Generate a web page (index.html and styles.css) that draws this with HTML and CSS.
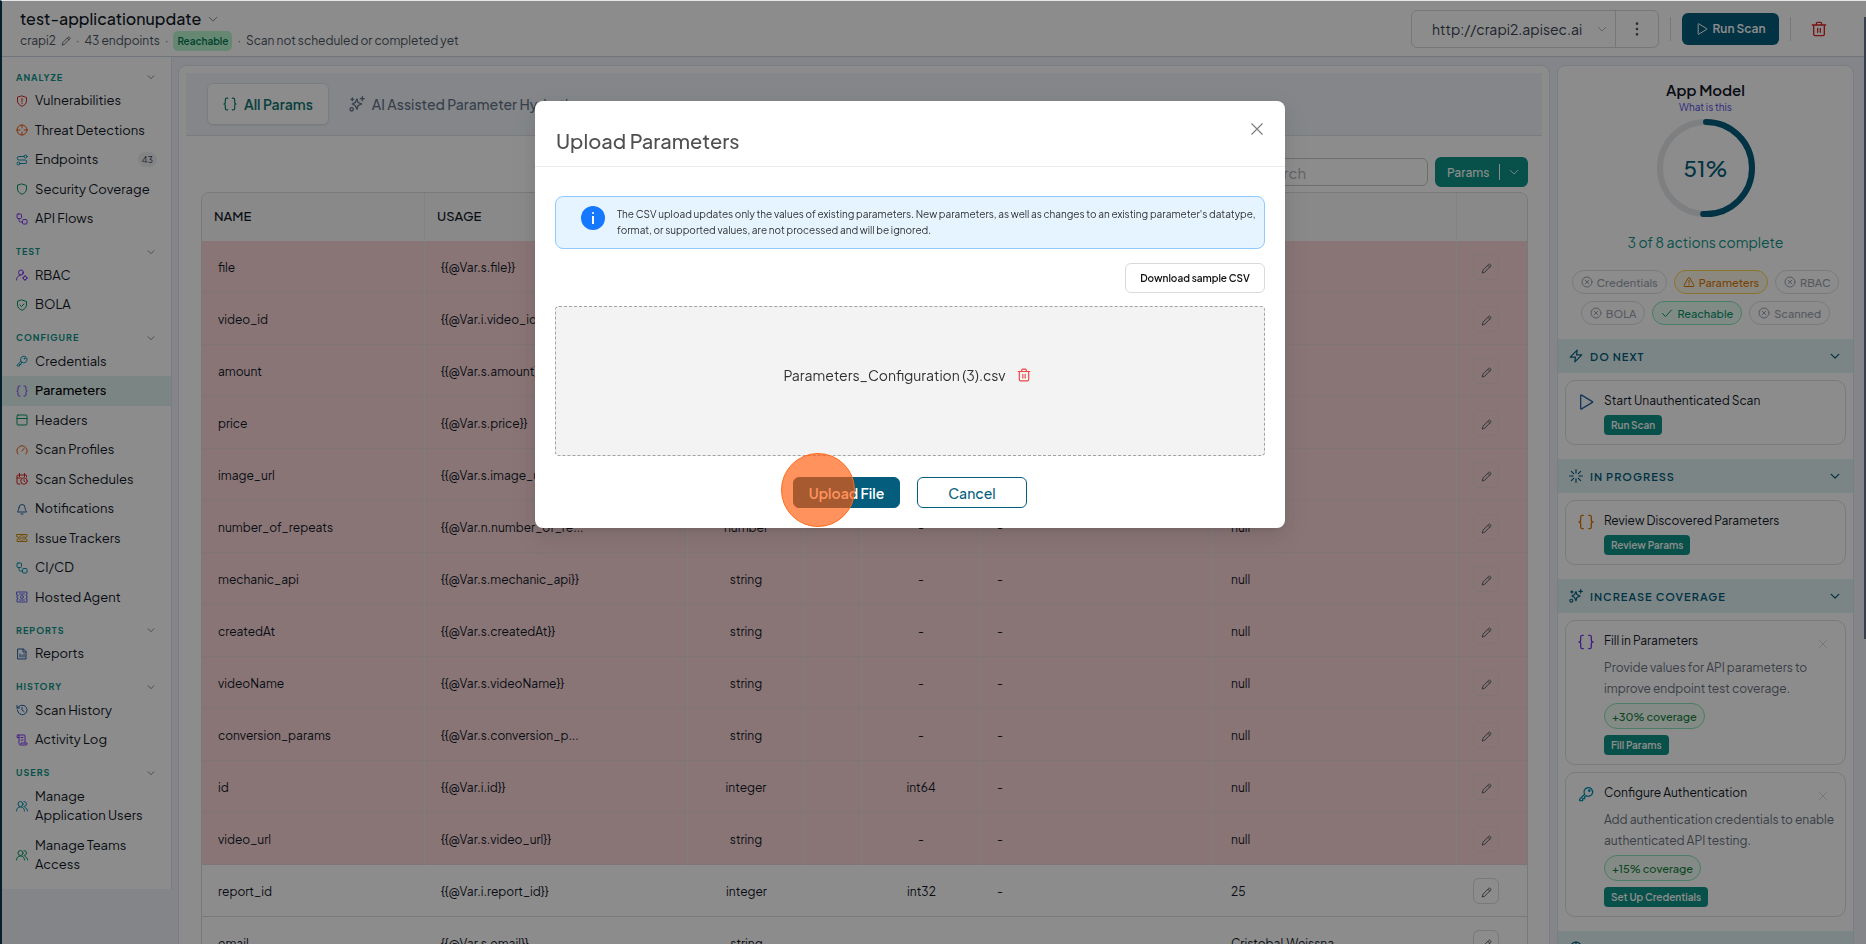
FILE: index.html
```html
<!DOCTYPE html>
<html lang="en">
<head>
  <meta charset="UTF-8">
  <meta name="viewport" content="width=device-width, initial-scale=1.0">
  <title>test-applicationupdate - Parameters</title>
  <link rel="stylesheet" href="styles.css">
</head>
<body>

  <!-- icon sprite -->
  <svg class="sprite" aria-hidden="true">
    <symbol id="i-down" viewBox="0 0 24 24"><path d="M3 8l9 9 9-9"/></symbol>
    <symbol id="i-pencil" viewBox="0 0 24 24"><path d="M3 21l1.500-5.500L17 3a2 2 0 0 1 3 0l1 1a2 2 0 0 1 0 3L8.500 19.500zM15 5l4 4"/></symbol>
    <symbol id="i-braces" viewBox="0 0 24 24"><path d="M8 2H6.500A2.500 2.500 0 0 0 4 4.500V9c0 1.700-1 3-2.500 3C3 12 4 13.300 4 15v4.500A2.500 2.500 0 0 0 6.500 22H8M16 2h1.500A2.500 2.500 0 0 1 20 4.500V9c0 1.700 1 3 2.500 3-1.500 0-2.500 1.300-2.500 3v4.500a2.500 2.500 0 0 1-2.500 2.500H16"/></symbol>
    <symbol id="i-spark" viewBox="0 0 24 24"><path d="M12 4.500l1.500 5L19 12l-5.500 2.500L12 20l-2.500-5.500L5 12l4.500-2.500zM20 1v6M17 4h6M5 3v4M3 5h4"/><circle cx="4" cy="20" r="2.500"/></symbol>
    <symbol id="i-shield" viewBox="0 0 24 24"><path d="M12 2l9 3v7c0 5-4 8.500-9 10.500C7 20.500 3 17 3 12V5z"/></symbol>
    <symbol id="i-shield-alert" viewBox="0 0 24 24"><path d="M12 2l9 3v7c0 5-4 8.500-9 10.500C7 20.500 3 17 3 12V5zM12 7v6M12 16v1"/></symbol>
    <symbol id="i-shield-check" viewBox="0 0 24 24"><path d="M12 2l9 3v7c0 5-4 8.500-9 10.500C7 20.500 3 17 3 12V5zM8 12l3 3 5-5"/></symbol>
    <symbol id="i-target" viewBox="0 0 24 24"><circle cx="12" cy="12" r="10"/><path d="M12 2v6M12 16v6M2 12h6M16 12h6"/></symbol>
    <symbol id="i-route" viewBox="0 0 24 24"><path d="M16 5H6a3.500 3.500 0 0 0 0 7h12a3.500 3.500 0 0 1 0 7H8"/><circle cx="19" cy="5" r="3"/><circle cx="5" cy="19" r="3"/></symbol>
    <symbol id="i-flow" viewBox="0 0 24 24"><rect x="2" y="2" width="9" height="9" rx="2"/><rect x="13" y="13" width="9" height="9" rx="2"/><path d="M6 11v4a3 3 0 0 0 3 3h4"/></symbol>
    <symbol id="i-user-cog" viewBox="0 0 24 24"><circle cx="10" cy="7" r="5"/><path d="M1 22c0-5 3-9 8-10M14 7a5 5 0 0 1-2 4"/><circle cx="18" cy="18" r="3.500"/><path d="M18 13v2M18 21v2M13 18h2M21 18h2"/></symbol>
    <symbol id="i-key" viewBox="0 0 24 24"><path d="M10 12.500L2.500 20v2H7v-3h3v-3l2-1.500a6.500 6.500 0 1 0-2-2z"/><circle cx="17" cy="7" r="1"/></symbol>
    <symbol id="i-panel" viewBox="0 0 24 24"><rect x="2" y="2" width="20" height="20" rx="2"/><path d="M2 9h20"/></symbol>
    <symbol id="i-gauge" viewBox="0 0 24 24"><path d="M4 20a10 10 0 1 1 16 0M12 14l4-5"/></symbol>
    <symbol id="i-calendar" viewBox="0 0 24 24"><path d="M21 8V5a1 1 0 0 0-1-1H4a2 2 0 0 0-2 2v14a2 2 0 0 0 2 2h4M7 1v6M17 1v6M2 10h8"/><circle cx="16" cy="16" r="6.500"/><path d="M16 13v3l2 2"/></symbol>
    <symbol id="i-bell" viewBox="0 0 24 24"><path d="M6 9a6 6 0 0 1 12 0c0 6 3 7 3 9H3c0-2 3-3 3-9M10 22h4"/></symbol>
    <symbol id="i-ticket" viewBox="0 0 24 24"><path d="M2 5h20v4a3 3 0 0 0 0 6v4H2v-4a3 3 0 0 0 0-6zM12 5v3M12 11v3M12 17v2M8 8v8M16 8v8"/></symbol>
    <symbol id="i-agent" viewBox="0 0 24 24"><path d="M2 2h20v6h-2v2h2v4h-2v2h2v6H2v-6h2v-2H2v-4h2V8H2z"/><circle cx="12" cy="12" r="3"/><path d="M7 6h10M7 18h10"/></symbol>
    <symbol id="i-file" viewBox="0 0 24 24"><path d="M4 2h11l5 5v15H4zM14 2v6h6M8 12v6M12 14v4M16 12v6"/></symbol>
    <symbol id="i-history" viewBox="0 0 24 24"><path d="M3 12a9.500 9.500 0 1 0 3-7L2 8M2 3v5h5M12 7v5l4 3"/></symbol>
    <symbol id="i-scroll" viewBox="0 0 24 24"><path d="M18 17V4a2 2 0 0 0-2-2H4a2 2 0 0 1 2 2v15a3 3 0 0 0 3 3h11a2 2 0 0 0 2-2v-2H10v2M4 2a2 2 0 0 0-2 3v2h4M10 7h4M10 12h4"/></symbol>
    <symbol id="i-users" viewBox="0 0 24 24"><circle cx="9" cy="8" r="5"/><path d="M1 22c0-5 3-8 8-8s8 3 8 8M16 3a5 5 0 0 1 0 10M18 15c3 1 5 3 5 7"/></symbol>
    <symbol id="i-play" viewBox="0 0 24 24"><path d="M4 3a1 1 0 0 1 2-1l15 9a1 1 0 0 1 0 2L6 22a1 1 0 0 1-2-1z"/></symbol>
    <symbol id="i-trash" viewBox="0 0 24 24"><path d="M2 6h20M4 6v14a2 2 0 0 0 2 2h12a2 2 0 0 0 2-2V6M8 6V4a2 2 0 0 1 2-2h4a2 2 0 0 1 2 2v2M10 11v6M14 11v6"/></symbol>
    <symbol id="i-dots" viewBox="0 0 24 24"><path d="M12 4v.01M12 12v.01M12 20v.01"/></symbol>
    <symbol id="i-x" viewBox="0 0 24 24"><path d="M3 3l18 18M21 3L3 21"/></symbol>
    <symbol id="i-circle-x" viewBox="0 0 24 24"><circle cx="12" cy="12" r="10"/><path d="M8.500 8.500l7 7M15.500 8.500l-7 7"/></symbol>
    <symbol id="i-warn" viewBox="0 0 24 24"><path d="M10.500 4a2 2 0 0 1 3 0l8.500 15a1.500 1.500 0 0 1-1 2H3a1.500 1.500 0 0 1-1-2zM12 9v5M12 17v1"/></symbol>
    <symbol id="i-check" viewBox="0 0 24 24"><path d="M3 13l6 6L21 6"/></symbol>
    <symbol id="i-bolt" viewBox="0 0 24 24"><path d="M14 2L2 14h9l-1 8 12-12h-9z"/></symbol>
    <symbol id="i-loader" viewBox="0 0 24 24"><path d="M12 1v6M12 17v6M1 12h6M17 12h6M4 4l4 4M16 16l4 4M4 20l4-4M16 8l4-4"/></symbol>
  </svg>

  <div class="app">
    <header class="topbar">
      <div class="app-info">
        <h1>test-applicationupdate <svg class="icon icon-s"><use href="#i-down"/></svg></h1>
        <p class="app-meta">
          <span>crapi2</span><svg class="icon icon-s"><use href="#i-pencil"/></svg><span class="sep">·</span>
          <span>43 endpoints</span><span class="sep">·</span>
          <span class="reachable">Reachable</span><span class="sep">·</span>
          <span>Scan not scheduled or completed yet</span>
        </p>
      </div>
      <div class="top-actions">
        <div class="host-box">
          <select class="host" aria-label="Host"><option>http://crapi2.apisec.ai</option></select>
          <svg class="icon icon-s"><use href="#i-down"/></svg>
          <button class="more" aria-label="More"><svg class="icon icon-l"><use href="#i-dots"/></svg></button>
        </div>
        <span class="divider"></span>
        <button class="run-scan"><svg class="icon"><use href="#i-play"/></svg>Run Scan</button>
        <span class="divider"></span>
        <button class="remove-app" aria-label="Delete application"><svg class="icon icon-l"><use href="#i-trash"/></svg></button>
      </div>
    </header>

    <div class="body">
      <nav class="sidebar">
        <h2>ANALYZE<svg class="icon icon-xs"><use href="#i-down"/></svg></h2>
        <a href="#" class="red"><svg class="icon"><use href="#i-shield-alert"/></svg><span>Vulnerabilities</span></a>
        <a href="#" class="orange"><svg class="icon"><use href="#i-target"/></svg><span>Threat Detections</span></a>
        <a href="#" class="cyan"><svg class="icon"><use href="#i-route"/></svg><span>Endpoints</span><em>43</em></a>
        <a href="#" class="green"><svg class="icon"><use href="#i-shield"/></svg><span>Security Coverage</span></a>
        <a href="#" class="purple"><svg class="icon"><use href="#i-flow"/></svg><span>API Flows</span></a>
        <h2>TEST<svg class="icon icon-xs"><use href="#i-down"/></svg></h2>
        <a href="#" class="purple"><svg class="icon"><use href="#i-user-cog"/></svg><span>RBAC</span></a>
        <a href="#" class="green"><svg class="icon"><use href="#i-shield-check"/></svg><span>BOLA</span></a>
        <h2>CONFIGURE<svg class="icon icon-xs"><use href="#i-down"/></svg></h2>
        <a href="#" class="cyan"><svg class="icon"><use href="#i-key"/></svg><span>Credentials</span></a>
        <a href="#" class="purple active"><svg class="icon"><use href="#i-braces"/></svg><span>Parameters</span></a>
        <a href="#" class="green"><svg class="icon"><use href="#i-panel"/></svg><span>Headers</span></a>
        <a href="#" class="orange"><svg class="icon"><use href="#i-gauge"/></svg><span>Scan Profiles</span></a>
        <a href="#" class="red"><svg class="icon"><use href="#i-calendar"/></svg><span>Scan Schedules</span></a>
        <a href="#" class="blue"><svg class="icon"><use href="#i-bell"/></svg><span>Notifications</span></a>
        <a href="#" class="yellow"><svg class="icon"><use href="#i-ticket"/></svg><span>Issue Trackers</span></a>
        <a href="#" class="cyan"><svg class="icon"><use href="#i-flow"/></svg><span>CI/CD</span></a>
        <a href="#" class="indigo"><svg class="icon"><use href="#i-agent"/></svg><span>Hosted Agent</span></a>
        <h2>REPORTS<svg class="icon icon-xs"><use href="#i-down"/></svg></h2>
        <a href="#" class="blue"><svg class="icon"><use href="#i-file"/></svg><span>Reports</span></a>
        <h2>HISTORY<svg class="icon icon-xs"><use href="#i-down"/></svg></h2>
        <a href="#" class="blue"><svg class="icon"><use href="#i-history"/></svg><span>Scan History</span></a>
        <a href="#" class="purple"><svg class="icon"><use href="#i-scroll"/></svg><span>Activity Log</span></a>
        <h2>USERS<svg class="icon icon-xs"><use href="#i-down"/></svg></h2>
        <a href="#" class="cyan"><svg class="icon"><use href="#i-users"/></svg><span>Manage Application Users</span></a>
        <a href="#" class="green"><svg class="icon"><use href="#i-users"/></svg><span>Manage Teams Access</span></a>
      </nav>

      <main class="content">
        <div class="tabs">
          <button class="tab current"><svg class="icon"><use href="#i-braces"/></svg>All Params</button>
          <button class="tab"><svg class="icon icon-l"><use href="#i-spark"/></svg>AI Assisted Parameter Hydration</button>
        </div>

        <div class="table-area">
          <div class="toolbar">
            <input type="text" class="search" placeholder="Search" aria-label="Search">
            <button class="params-btn">Params<span class="bar"></span><svg class="icon icon-s"><use href="#i-down"/></svg></button>
          </div>

          <div class="table-box">
            <table>
              <colgroup>
                <col class="c-name"><col class="c-usage"><col class="c-type"><col class="c-gap"><col class="c-format"><col class="c-values"><col class="c-default"><col class="c-edit">
              </colgroup>
              <thead>
                <tr><th>NAME</th><th>USAGE</th><th></th><th></th><th></th><th></th><th></th><th></th></tr>
              </thead>
              <tbody>
                <tr class="missing"><td>file</td><td>{{@Var.s.file}}</td><td></td><td></td><td></td><td></td><td></td><td><button class="edit" aria-label="Edit"><svg class="icon"><use href="#i-pencil"/></svg></button></td></tr>
                <tr class="missing"><td>video_id</td><td>{{@Var.i.video_id}}</td><td></td><td></td><td></td><td></td><td></td><td><button class="edit" aria-label="Edit"><svg class="icon"><use href="#i-pencil"/></svg></button></td></tr>
                <tr class="missing"><td>amount</td><td>{{@Var.s.amount}}</td><td></td><td></td><td></td><td></td><td></td><td><button class="edit" aria-label="Edit"><svg class="icon"><use href="#i-pencil"/></svg></button></td></tr>
                <tr class="missing"><td>price</td><td>{{@Var.s.price}}</td><td></td><td></td><td></td><td></td><td></td><td><button class="edit" aria-label="Edit"><svg class="icon"><use href="#i-pencil"/></svg></button></td></tr>
                <tr class="missing"><td>image_url</td><td>{{@Var.s.image_url}}</td><td></td><td></td><td></td><td></td><td></td><td><button class="edit" aria-label="Edit"><svg class="icon"><use href="#i-pencil"/></svg></button></td></tr>
                <tr class="missing"><td>number_of_repeats</td><td>{{@Var.n.number_of_re...</td><td>number</td><td></td><td>-</td><td>-</td><td>null</td><td><button class="edit" aria-label="Edit"><svg class="icon"><use href="#i-pencil"/></svg></button></td></tr>
                <tr class="missing"><td>mechanic_api</td><td>{{@Var.s.mechanic_api}}</td><td>string</td><td></td><td>-</td><td>-</td><td>null</td><td><button class="edit" aria-label="Edit"><svg class="icon"><use href="#i-pencil"/></svg></button></td></tr>
                <tr class="missing"><td>createdAt</td><td>{{@Var.s.createdAt}}</td><td>string</td><td></td><td>-</td><td>-</td><td>null</td><td><button class="edit" aria-label="Edit"><svg class="icon"><use href="#i-pencil"/></svg></button></td></tr>
                <tr class="missing"><td>videoName</td><td>{{@Var.s.videoName}}</td><td>string</td><td></td><td>-</td><td>-</td><td>null</td><td><button class="edit" aria-label="Edit"><svg class="icon"><use href="#i-pencil"/></svg></button></td></tr>
                <tr class="missing"><td>conversion_params</td><td>{{@Var.s.conversion_p...</td><td>string</td><td></td><td>-</td><td>-</td><td>null</td><td><button class="edit" aria-label="Edit"><svg class="icon"><use href="#i-pencil"/></svg></button></td></tr>
                <tr class="missing"><td>id</td><td>{{@Var.i.id}}</td><td>integer</td><td></td><td>int64</td><td>-</td><td>null</td><td><button class="edit" aria-label="Edit"><svg class="icon"><use href="#i-pencil"/></svg></button></td></tr>
                <tr class="missing"><td>video_url</td><td>{{@Var.s.video_url}}</td><td>string</td><td></td><td>-</td><td>-</td><td>null</td><td><button class="edit" aria-label="Edit"><svg class="icon"><use href="#i-pencil"/></svg></button></td></tr>
                <tr><td>report_id</td><td>{{@Var.i.report_id}}</td><td>integer</td><td></td><td>int32</td><td>-</td><td>25</td><td><button class="edit" aria-label="Edit"><svg class="icon"><use href="#i-pencil"/></svg></button></td></tr>
                <tr><td>email</td><td>{{@Var.s.email}}</td><td>string</td><td></td><td></td><td></td><td>Cristobal.Weissna</td><td><button class="edit" aria-label="Edit"><svg class="icon"><use href="#i-pencil"/></svg></button></td></tr>
              </tbody>
            </table>
          </div>
        </div>
      </main>

      <aside class="model">
        <div class="summary">
          <h2>App Model</h2>
          <a href="#">What is this</a>
          <div class="ring">
            <svg viewBox="0 0 100 100">
              <circle class="ring-track" cx="50" cy="50" r="46"/>
              <circle class="ring-value" cx="50" cy="50" r="46" pathLength="100"/>
            </svg>
            <strong>51%</strong>
          </div>
          <p>3 of 8 actions complete</p>
          <div class="chips">
            <span class="chip"><svg class="icon"><use href="#i-circle-x"/></svg>Credentials</span>
            <span class="chip warn"><svg class="icon"><use href="#i-warn"/></svg>Parameters</span>
            <span class="chip"><svg class="icon"><use href="#i-circle-x"/></svg>RBAC</span>
            <span class="chip"><svg class="icon"><use href="#i-circle-x"/></svg>BOLA</span>
            <span class="chip ok"><svg class="icon"><use href="#i-check"/></svg>Reachable</span>
            <span class="chip"><svg class="icon"><use href="#i-circle-x"/></svg>Scanned</span>
          </div>
        </div>

        <h3><svg class="icon"><use href="#i-bolt"/></svg>DO NEXT<svg class="icon icon-s fold"><use href="#i-down"/></svg></h3>
        <div class="cards">
          <div class="card blue">
            <svg class="icon icon-l"><use href="#i-play"/></svg>
            <div class="card-text">
              <h4>Start Unauthenticated Scan</h4>
              <button class="do">Run Scan</button>
            </div>
          </div>
        </div>

        <h3><svg class="icon"><use href="#i-loader"/></svg>IN PROGRESS<svg class="icon icon-s fold"><use href="#i-down"/></svg></h3>
        <div class="cards">
          <div class="card amber">
            <svg class="icon icon-l"><use href="#i-braces"/></svg>
            <div class="card-text">
              <h4>Review Discovered Parameters</h4>
              <button class="do">Review Params</button>
            </div>
          </div>
        </div>

        <h3><svg class="icon"><use href="#i-spark"/></svg>INCREASE COVERAGE<svg class="icon icon-s fold"><use href="#i-down"/></svg></h3>
        <div class="cards">
          <div class="card purple">
            <svg class="icon icon-l"><use href="#i-braces"/></svg>
            <div class="card-text">
              <div class="card-title">
                <h4>Fill in Parameters</h4>
                <button class="dismiss" aria-label="Dismiss"><svg class="icon icon-s"><use href="#i-x"/></svg></button>
              </div>
              <p>Provide values for API parameters to improve endpoint test coverage.</p>
              <span class="gain">+30% coverage</span>
              <button class="do">Fill Params</button>
            </div>
          </div>
          <div class="card cyan">
            <svg class="icon icon-l"><use href="#i-key"/></svg>
            <div class="card-text">
              <div class="card-title">
                <h4>Configure Authentication</h4>
                <button class="dismiss" aria-label="Dismiss"><svg class="icon icon-s"><use href="#i-x"/></svg></button>
              </div>
              <p>Add authentication credentials to enable authenticated API testing.</p>
              <span class="gain">+15% coverage</span>
              <button class="do">Set Up Credentials</button>
            </div>
          </div>
        </div>
        <h3><svg class="icon"><use href="#i-target"/></svg></h3>
      </aside>
    </div>
    <div class="scrollbar"></div>
  </div>

  <div class="backdrop">
    <div class="modal" role="dialog" aria-labelledby="modal-title">
      <div class="modal-head">
        <h2 id="modal-title">Upload Parameters</h2>
        <button class="close" aria-label="Close"><svg class="icon"><use href="#i-x"/></svg></button>
      </div>
      <div class="modal-body">
        <div class="notice">
          <svg class="info" viewBox="0 0 24 24"><circle cx="12" cy="12" r="12"/><path d="M12 10v8"/><circle class="info-dot" cx="12" cy="7" r="1"/></svg>
          <p>The CSV upload updates only the values of existing parameters. New parameters, as well as changes to an existing parameter's datatype, format, or supported values, are not processed and will be ignored.</p>
        </div>
        <button class="sample">Download sample CSV</button>
        <div class="drop">
          <span>Parameters_Configuration (3).csv</span>
          <button class="remove-file" aria-label="Remove file"><svg class="icon"><use href="#i-trash"/></svg></button>
        </div>
        <div class="modal-actions">
          <button class="upload">Upload File<span class="click-mark"></span></button>
          <button class="cancel">Cancel</button>
        </div>
      </div>
    </div>
  </div>

</body>
</html>
```
FILE: styles.css
```css
* {
  box-sizing: border-box;
}

body {
  font-family: "Plus Jakarta Sans", Inter, "Liberation Sans", sans-serif;
  font-size: 13px;
  color: #111827;
  background: #e5e7eb;
  margin: 0;
  height: 100vh;
  overflow: hidden;
}

h1, h2, h3, h4, p {
  margin: 0;
}

button, input, select {
  font-family: inherit;
  margin: 0;
}

button {
  background: none;
  border: none;
  padding: 0;
  cursor: pointer;
}

a {
  text-decoration: none;
}

.sprite {
  display: none;
}

.icon {
  width: 14px;
  height: 14px;
  flex: none;
  fill: none;
  stroke: currentColor;
  stroke-width: 2;
  stroke-linecap: round;
  stroke-linejoin: round;
}

.icon-xs {
  width: 8px;
  height: 8px;
}

.icon-s {
  width: 10px;
  height: 10px;
}

.icon-l {
  width: 16px;
  height: 16px;
}

.red { color: #dc2626; }
.orange { color: #ea580c; }
.cyan { color: #0891b2; }
.green { color: #059669; }
.purple { color: #7c3aed; }
.blue { color: #2563a8; }
.yellow { color: #ca8a04; }
.indigo { color: #6366f1; }
.amber { color: #d97706; }

.app {
  position: relative;
  display: flex;
  flex-direction: column;
  height: 100vh;
  border-top: 1px solid #e5e7eb;
  border-left: 2px solid #0b3a4f;
  background: #f0f2fa;
}

.scrollbar {
  position: absolute;
  top: 16px;
  right: 0;
  width: 2px;
  height: 66%;
  background: #64748b;
}

/* top bar */
.topbar {
  display: flex;
  justify-content: space-between;
  align-items: center;
  height: 56px;
  flex: none;
  padding: 0 39px 0 18px;
  background: #fff;
  border-bottom: 1px solid #cbd5e1;
}

h1 {
  display: flex;
  align-items: center;
  gap: 7px;
  font-size: 16px;
  line-height: 24px;
  font-weight: 500;
}

h1 .icon {
  color: #6b7280;
}

.app-meta {
  display: flex;
  align-items: center;
  gap: 5px;
  line-height: 20px;
  font-size: 12px;
  color: #4b5563;
}

.sep {
  color: #6b7280;
}

.reachable {
  padding: 0 4px;
  border-radius: 5px;
  background: #bbf7d0;
  color: #047857;
  font-size: 10px;
  font-weight: 600;
}

.top-actions {
  display: flex;
  align-items: center;
  gap: 11px;
}

.host-box {
  display: flex;
  align-items: center;
  height: 38px;
  padding-left: 20px;
  border: 1px solid #d9d9d9;
  border-radius: 6px;
  color: #9ca3af;
}

.host {
  appearance: none;
  width: 165px;
  padding: 0;
  border: none;
  background: none;
  font-size: 14px;
  color: #374151;
}

.more {
  display: flex;
  align-items: center;
  justify-content: center;
  width: 43px;
  height: 36px;
  margin-left: 8px;
  border-left: 1px solid #d9d9d9;
  color: #4b5563;
}

.more .icon {
  stroke-width: 4;
}

.divider {
  width: 1px;
  height: 24px;
  background: #d9d9d9;
}

.run-scan {
  display: flex;
  align-items: center;
  justify-content: center;
  gap: 5px;
  width: 97px;
  height: 32px;
  border-radius: 6px;
  background: #045d7c;
  color: #fff;
  font-size: 12px;
  font-weight: 600;
}

.run-scan .icon {
  width: 12px;
  height: 12px;
}

.remove-app {
  margin-left: 9px;
  color: #dc2626;
}

.remove-app .icon {
  display: block;
}

.body {
  display: flex;
  align-items: flex-start;
  flex: 1;
  min-height: 0;
  padding-right: 12px;
}

/* sidebar */
.sidebar {
  width: 170px;
  flex: none;
  padding: 2px 0 9px;
  background: #fff;
  border-right: 1px solid #dfe3ee;
}

.sidebar h2 {
  display: flex;
  align-items: center;
  justify-content: space-between;
  height: 18px;
  margin-top: 9px;
  padding: 0 16px 0 14px;
  font-size: 9px;
  letter-spacing: 1px;
  color: #0d9488;
}

.sidebar h2 .icon {
  color: #4b5563;
}

.sidebar a {
  display: flex;
  align-items: center;
  gap: 7px;
  padding: 5px 14px;
  line-height: 1.5;
}

.sidebar a .icon {
  width: 12px;
  height: 12px;
}

.sidebar a span {
  flex: 1;
  color: #111827;
}

.sidebar a.active {
  background: #e0f2f1;
}

.sidebar a.active span {
  color: #000;
  font-weight: 500;
}

.sidebar em {
  padding: 0 4px;
  border-radius: 8px;
  background: #eef0f2;
  color: #374151;
  font-size: 9px;
  font-style: normal;
  line-height: 15px;
}

/* main card */
.content {
  flex: 1;
  min-width: 0;
  height: 100%;
  margin-left: 6px;
  margin-top: 8px;
  padding: 7px 7px 0;
  background: #fff;
  border: 1px solid #dfe3ee;
  border-radius: 8px 8px 0 0;
}

.tabs {
  display: flex;
  align-items: center;
  gap: 4px;
  height: 63px;
  padding: 0 21px;
  background: #f1f5f9;
  border-bottom: 1px solid #dfe3e8;
}

.tab {
  display: flex;
  align-items: center;
  gap: 7px;
  height: 42px;
  padding: 0 15px;
  border: 1px solid transparent;
  border-radius: 6px;
  color: #64748b;
  font-size: 14px;
  font-weight: 500;
}

.tab.current {
  background: #fff;
  border-color: #dfe3e8;
  box-shadow: 0 1px 2px rgba(0, 0, 0, 0.06);
  color: #0f766e;
  font-weight: 600;
}

.table-area {
  padding: 21px 14px 0 15px;
}

.toolbar {
  display: flex;
  justify-content: flex-end;
  align-items: center;
  gap: 7px;
  height: 30px;
}

.search {
  width: 184px;
  height: 28px;
  padding: 0 11px;
  border: 1px solid #c4c8ce;
  border-radius: 6px;
  background: #fff;
  font-size: 15px;
}

.search::placeholder {
  color: #b0b4ba;
}

.params-btn {
  display: flex;
  align-items: center;
  justify-content: space-between;
  width: 93px;
  height: 30px;
  padding: 0 9px 0 12px;
  border-radius: 6px;
  background: #0d9488;
  color: #fff;
  font-size: 12px;
  font-weight: 500;
}

.bar {
  width: 1px;
  height: 16px;
  background: #fff;
}

.table-box {
  margin-top: 5px;
  border: 1px solid #d9dce0;
  border-radius: 8px 8px 0 0;
  overflow: hidden;
}

table {
  width: 100%;
  table-layout: fixed;
  border-collapse: separate;
  border-spacing: 0;
}

.c-name { width: 223px; }
.c-usage { width: 263px; }
.c-type { width: 117px; }
.c-gap { width: 57px; }
.c-format { width: 119px; }
.c-values { width: 232px; }
.c-default { width: 244px; }
.c-edit { width: 70px; }

th {
  height: 48px;
  padding: 0 12px 2px;
  text-align: left;
  font-weight: 500;
  background: #fafafa;
  border-right: 1px solid #eceef0;
}

td {
  height: 52px;
  padding: 2px 16px 0;
  border-bottom: 1px solid #d9dce0;
  font-size: 12px;
  white-space: nowrap;
  overflow: hidden;
}

td:nth-child(3),
td:nth-child(5) {
  padding: 2px 0 0;
  text-align: center;
}

td:nth-child(7) {
  padding-left: 18px;
}

td:last-child {
  padding: 0 12px 0 0;
  text-align: center;
}

.missing td {
  background: #f9d5d7;
  border-bottom-color: #ecd3d5;
  border-right: 1px solid #e8e4e5;
}

th:last-child,
.missing td:last-child {
  border-right: none;
}

.edit {
  width: 26px;
  height: 26px;
  border: 1px solid #d9dce0;
  border-radius: 6px;
  color: #4b5563;
  vertical-align: middle;
}

.edit .icon {
  width: 11px;
  height: 11px;
  vertical-align: middle;
}

.missing .edit {
  border-color: #ecd3d5;
}

/* app model panel */
.model {
  width: 297px;
  flex: none;
  height: 100%;
  margin: 8px 0 0 7px;
  background: #fff;
  border: 1px solid #dfe3ee;
  border-radius: 8px 8px 0 0;
  overflow: hidden;
}

.summary {
  display: flex;
  flex-direction: column;
  align-items: center;
  padding: 13px 8px 14px;
}

.summary h2 {
  font-size: 15px;
  font-weight: 600;
  line-height: 22px;
}

.summary a {
  font-size: 10px;
  line-height: 13px;
  color: #4f46e5;
}

.ring {
  display: grid;
  place-items: center;
  margin: 4px 0 12px;
}

.ring svg,
.ring strong {
  grid-area: 1 / 1;
}

.ring svg {
  width: 100px;
  height: 100px;
  transform: rotate(-90deg);
}

.ring strong {
  font-size: 22px;
  font-weight: 500;
  color: #045d7c;
}

.ring-track,
.ring-value {
  fill: none;
  stroke-width: 6;
  stroke: #e5e7eb;
}

.ring-value {
  stroke: #045d7c;
  stroke-linecap: round;
  stroke-dasharray: 51 49;
}

.summary p {
  font-size: 14px;
  line-height: 24px;
  color: #0d9488;
}

.chips {
  display: flex;
  flex-wrap: wrap;
  justify-content: center;
  gap: 7px;
  margin-top: 16px;
}

.chip {
  display: flex;
  align-items: center;
  gap: 4px;
  height: 24px;
  padding: 0 8px;
  border: 1px solid #dcdfe3;
  border-radius: 12px;
  color: #9ca3af;
  font-size: 11px;
  font-weight: 500;
}

.chip .icon {
  width: 12px;
  height: 12px;
}

.chip.warn {
  background: #fef9e7;
  border-color: #fcd34d;
  color: #d97706;
}

.chip.ok {
  background: #ecfdf5;
  border-color: #86e3b8;
  color: #059669;
}

.model h3 {
  display: flex;
  align-items: center;
  gap: 7px;
  height: 34px;
  padding: 0 13px 0 11px;
  background: #e0f2f4;
  color: #045d7c;
  font-size: 11px;
  font-weight: 600;
  letter-spacing: 1px;
}

.fold {
  margin-left: auto;
  stroke-width: 3;
}

.cards {
  display: flex;
  flex-direction: column;
  gap: 7px;
  padding: 7px 7px 14px;
}

.card {
  display: flex;
  gap: 10px;
  padding: 11px 8px 9px 12px;
  border: 1px solid #dcdfe3;
  border-radius: 10px;
}

.card > .icon {
  margin-top: 2px;
}

.card-text {
  display: flex;
  flex-direction: column;
  align-items: flex-start;
  flex: 1;
}

.card-title {
  display: flex;
  justify-content: space-between;
  align-self: stretch;
  height: 18px;
}

.card h4 {
  font-size: 12px;
  font-weight: 400;
  line-height: 18px;
  color: #111827;
}

.card p {
  margin: 7px 0 4px;
  font-size: 12px;
  line-height: 21px;
  color: #6b7280;
}

.gain {
  padding: 2px 7px 0;
  margin-bottom: 1px;
  border: 1px solid #86e3b8;
  border-radius: 13px;
  background: #f0fdf4;
  color: #15803d;
  font-size: 11px;
  line-height: 22px;
  font-weight: 500;
}

.do {
  height: 20px;
  margin-top: 5px;
  padding: 0 7px;
  border-radius: 4px;
  background: #0d9488;
  color: #fff;
  font-size: 10px;
  font-weight: 600;
}

.dismiss {
  width: 22px;
  height: 22px;
  margin-right: 3px;
  color: #d1d5db;
}

/* upload dialog */
.backdrop {
  position: fixed;
  inset: 1px 0 0;
  display: flex;
  justify-content: center;
  align-items: flex-start;
  padding: 100px 46px 0 0;
  background: rgba(0, 0, 0, 0.45);
}

.modal {
  width: 750px;
  background: #fff;
  border-radius: 8px;
  box-shadow: 0 6px 16px rgba(0, 0, 0, 0.08), 0 3px 6px -4px rgba(0, 0, 0, 0.12), 0 9px 28px 8px rgba(0, 0, 0, 0.05);
}

.modal-head {
  display: flex;
  justify-content: space-between;
  padding: 20px 20px 10px 21px;
  border-bottom: 1px solid #ececec;
}

.modal-head h2 {
  margin-top: 5px;
  font-size: 20px;
  line-height: 30px;
  font-weight: 500;
  color: #505050;
}

.close {
  width: 15px;
  height: 16px;
  color: #808080;
}

.close .icon {
  display: block;
}

.modal-body {
  display: flex;
  flex-direction: column;
  padding: 29px 20px 20px;
}

.notice {
  display: flex;
  gap: 12px;
  padding: 9px 8px 10px 25px;
  border: 1px solid #91caff;
  border-radius: 8px;
  background: #e6f4ff;
}

.info {
  width: 24px;
  height: 24px;
  flex: none;
  fill: #1677ff;
  stroke: none;
}

.info path {
  stroke: #fff;
  stroke-width: 2;
}

.info .info-dot {
  fill: #fff;
}

.notice p {
  font-size: 10px;
  line-height: 16px;
  color: #303030;
}

.sample {
  align-self: flex-end;
  width: 140px;
  height: 30px;
  margin: 14px 0 13px;
  border: 1px solid #d9d9d9;
  border-radius: 6px;
  background: #fff;
  color: #111;
  font-size: 10px;
  font-weight: 600;
}

.drop {
  display: flex;
  align-items: center;
  justify-content: center;
  gap: 11px;
  height: 150px;
  border: 1px dashed #a3a3a3;
  border-radius: 4px;
  background: #f3f3f3;
  color: #303030;
  font-size: 14px;
  padding: 0 6px 12px 0;
}

.remove-file {
  color: #ef4444;
}

.remove-file .icon {
  display: block;
}

.modal-actions {
  display: flex;
  justify-content: center;
  gap: 17px;
  margin-top: 21px;
}

.upload,
.cancel {
  position: relative;
  width: 107px;
  height: 31px;
  border: 1px solid #045d7c;
  border-radius: 6px;
  font-size: 14px;
}

.upload {
  background: #045d7c;
  color: #fff;
  font-weight: 600;
}

.cancel {
  width: 110px;
  background: #fff;
  color: #045d7c;
  font-weight: 500;
}

/* ring that marks where the pointer was clicked */
.click-mark {
  position: absolute;
  top: -25px;
  left: -13px;
  width: 74px;
  height: 74px;
  border: 1px solid #ff6a1a;
  border-radius: 50%;
  background: rgba(255, 88, 6, 0.65);
}
```
